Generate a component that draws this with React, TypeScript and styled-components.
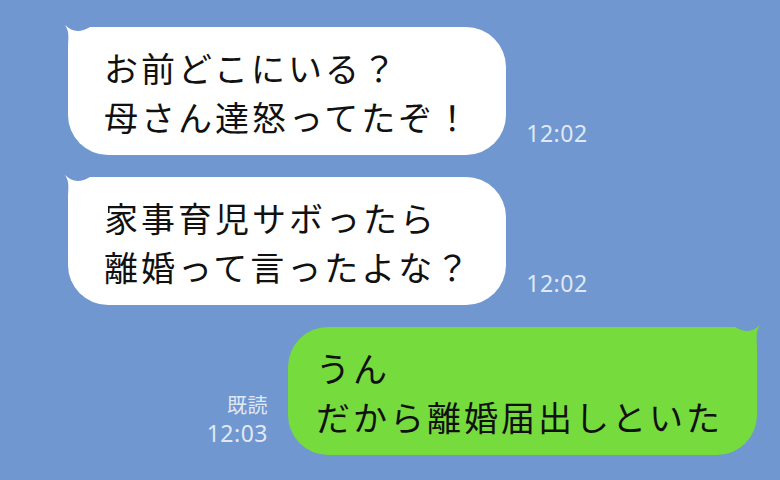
import styled, { createGlobalStyle } from "styled-components";

const GlobalStyle = createGlobalStyle`
  html, body {
    margin: 0;
    padding: 0;
    background: #7097d0;
  }
`;

const Screen = styled.div`
  width: 780px;
  height: 480px;
  overflow: hidden;
  box-sizing: border-box;
  padding-top: 27px;
  background: #7097d0;
  display: flex;
  flex-direction: column;
  gap: 22px;
  font-family: "Noto Sans CJK JP", "Noto Sans", sans-serif;
`;

const Row = styled.div<{ $mine?: boolean }>`
  display: flex;
  align-items: flex-end;
  gap: 20px;
  justify-content: ${(p) => (p.$mine ? "flex-end" : "flex-start")};
  padding: ${(p) => (p.$mine ? "0 23px 0 0" : "0 0 0 68px")};
`;

const Bubble = styled.div<{ $mine?: boolean }>`
  position: relative;
  background: ${(p) => (p.$mine ? "#76db3d" : "#ffffff")};
  color: #111;
  border-radius: 40px;
  padding: ${(p) => (p.$mine ? "16px 34px 14px 28px" : "16px 34px 14px 36px")};
  font-size: 34px;
  line-height: 49px;
  letter-spacing: 3px;
  white-space: nowrap;
`;

const Tail = styled.svg<{ $mine?: boolean }>`
  position: absolute;
  top: -4px;
  width: 46px;
  height: 46px;
  ${(p) => (p.$mine ? "right: -6px; transform: scaleX(-1);" : "left: -6px;")}
`;

const Meta = styled.div<{ $mine?: boolean }>`
  display: flex;
  flex-direction: column;
  align-items: ${(p) => (p.$mine ? "flex-end" : "flex-start")};
  color: rgba(255, 255, 255, 0.8);
  font-family: "Noto Sans", "Noto Sans CJK JP", sans-serif;
  font-size: 23px;
  line-height: 28px;
  letter-spacing: 0.5px;
  margin-bottom: 8px;
`;

const Read = styled.span`
  font-family: "Noto Sans CJK JP", sans-serif;
  font-size: 20px;
`;

function BubbleTail({ mine, color }: { mine?: boolean; color: string }) {
  return (
    <Tail $mine={mine} viewBox="0 0 46 46">
      <path
        d="M3 2 C10 9 18 10 28 4 L46 4 L46 46 L6 46 L6 26 C6 16 8 9 3 2 Z"
        fill={color}
      />
    </Tail>
  );
}

interface IMessage {
  id: number;
  mine: boolean;
  lines: string[];
  time: string;
  read?: boolean;
}

const messages: IMessage[] = [
  { id: 1, mine: false, lines: ["お前どこにいる？", "母さん達怒ってたぞ！"], time: "12:02" },
  { id: 2, mine: false, lines: ["家事育児サボったら", "離婚って言ったよな？"], time: "12:02" },
  { id: 3, mine: true, lines: ["うん", "だから離婚届出しといた"], time: "12:03", read: true },
];

function App() {
  return (
    <>
      <GlobalStyle />
      <Screen>
        {messages.map((m) => {
          const color = m.mine ? "#76db3d" : "#ffffff";
          const meta = (
            <Meta $mine={m.mine}>
              {m.read && <Read>既読</Read>}
              <span>{m.time}</span>
            </Meta>
          );
          return (
            <Row key={m.id} $mine={m.mine}>
              {m.mine && meta}
              <Bubble $mine={m.mine}>
                <BubbleTail mine={m.mine} color={color} />
                {m.lines.map((l, i) => (
                  <div key={i}>{l}</div>
                ))}
              </Bubble>
              {!m.mine && meta}
            </Row>
          );
        })}
      </Screen>
    </>
  );
}

export default App;
